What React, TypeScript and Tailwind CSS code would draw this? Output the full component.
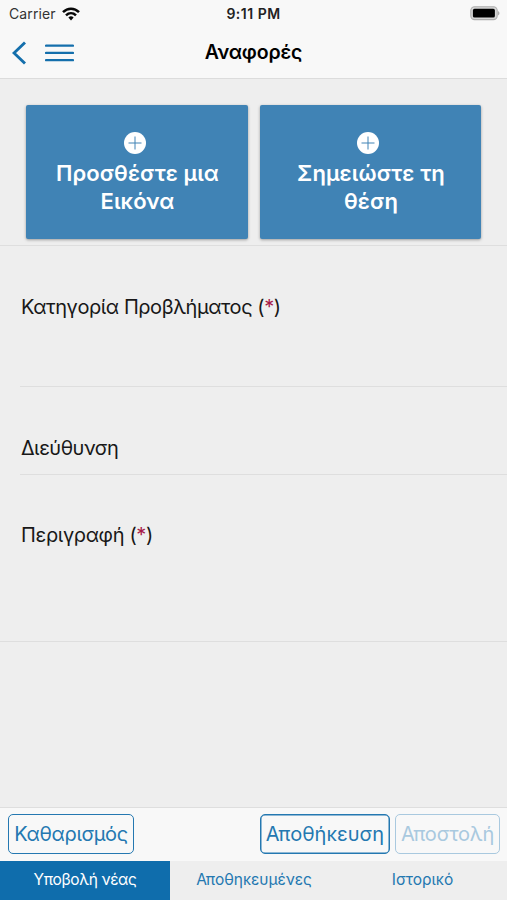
interface PhotoButtonProps {
  lines: string[];
  className: string;
}

const fields = [
  { label: "Κατηγορία Προβλήματος", required: true, row: "h-[141px] pt-[47px]", line: "border-b", text: "tracking-[-0.44px]" },
  { label: "Διεύθυνση", required: false, row: "h-[88px] pt-[47px]", line: "border-b", text: "tracking-[-0.5px]" },
  { label: "Περιγραφή", required: true, row: "h-[166px] pt-[46px]", line: "", text: "tracking-[-0.36px]" },
];

function StatusBar() {
  return (
    <div className="grid h-[27px] grid-cols-3 items-center px-[9px] text-[14px] leading-none">
      <div className="flex items-center gap-[6px]">
        <span className="tracking-[0.1px] text-[#333]">Carrier</span>
        <svg width="18" height="14" viewBox="0 0 18 14" fill="none" stroke="#080808" strokeWidth="2.5">
          <path d="M1 5.2C5.6.6 12.4.6 17 5.2" />
          <path d="M4 8.3c2.9-2.8 7.1-2.8 10 0" />
          <path d="M6.4 10.4a3.8 3.8 0 0 1 5.2 0L9 13.5z" fill="#080808" stroke="none" />
        </svg>
      </div>
      <span className="pt-[1px] text-center font-semibold tracking-[0.5px] text-[#222]">9:11 PM</span>
      <svg className="-mr-[2px] justify-self-end" width="30" height="15" viewBox="0 0 30 15">
        <rect x="0.8" y="0.8" width="26.4" height="12.8" rx="3.8" fill="#d6d6d6" stroke="#adadad" strokeWidth="1.1" />
        <rect x="2.9" y="2.8" width="22" height="8.8" rx="1.6" fill="#000" />
        <path d="M28 5v4.4c2-.8 2-3.6 0-4.4z" fill="#adadad" />
      </svg>
    </div>
  );
}

function PhotoButton({ lines, className }: PhotoButtonProps) {
  return (
    <button
      className={`flex h-[134px] flex-col items-center rounded-[2px] bg-[#4083b5] pt-[27px] text-white shadow-[0_1px_3px_rgba(0,0,0,0.35)] ${className}`}
    >
      <svg className="mr-[5px]" width="22" height="22" viewBox="0 0 22 22">
        <circle cx="11" cy="11" r="11" fill="#fff" />
        <path d="M11 4.5v13M4.5 11h13" stroke="#4083b5" strokeWidth="1" />
      </svg>
      <span className="mt-[5px] ml-[1px] text-center text-[22px] leading-[28px] font-semibold tracking-[0.1px]">
        {lines[0]}
        <br />
        {lines[1]}
      </span>
    </button>
  );
}

export default function App() {
  return (
    <div className="flex h-[900px] w-[507px] flex-col overflow-hidden bg-[#eeeeee] font-['Inter','Noto_Sans',sans-serif] text-black">
      <header className="h-[79px] border-b border-[#dcdcdc] bg-[#f8f8f8]">
        <StatusBar />
        <div className="grid h-[51px] grid-cols-[1fr_auto_1fr] items-center">
          <div className="flex items-center gap-[19px] pl-[12px]">
            <svg width="14" height="24" viewBox="0 0 14 24" fill="none" stroke="#146fac" strokeWidth="2.9">
              <path d="M13 1.5 2 12l11 10.5" />
            </svg>
            <svg width="29" height="18" viewBox="0 0 29 18" fill="none" stroke="#146fac" strokeWidth="2.2" strokeLinecap="round">
              <path d="M1 1.7h27M1 8.9h27M1 16.1h27" />
            </svg>
          </div>
          <h1 className="text-[19.5px] font-semibold tracking-[-0.15px]">Αναφορές</h1>
        </div>
      </header>

      <main className="flex-1">
        <div className="flex h-[167px] gap-[12px] border-b border-[#dedede] pt-[26px] pl-[26px]">
          <PhotoButton lines={["Προσθέστε μια", "Εικόνα"]} className="w-[222px]" />
          <PhotoButton lines={["Σημειώστε τη", "θέση"]} className="w-[221px]" />
        </div>

        {/* Campos del formulario */}
        <div className="border-b border-[#dedede]">
          {fields.map((f) => (
            <div key={f.label} className={`ml-[20px] border-[#dedede] pl-[1px] ${f.row} ${f.line}`}>
              <label className={`block text-[20px] leading-[28px] text-[#181818] ${f.text}`}>
                {f.label}
                {f.required && (
                  <>
                    {" "}
                    (<span className="text-[#a71946]">*</span>)
                  </>
                )}
              </label>
            </div>
          ))}
        </div>
      </main>

      <footer>
        <div className="flex h-[54px] items-center border-t border-[#dedede] bg-[#f8f8f8] pb-[1px] pl-[8px] text-[20px] text-[#2478b1]">
          <button className="h-[40px] w-[126px] rounded-[5px] border border-[#2478b1] tracking-[-0.35px]">Καθαρισμός</button>
          <button className="ml-[126px] h-[40px] w-[130px] rounded-[5px] border border-[#2478b1] shadow-[inset_0_0_0_0.5px_#2478b1]">Αποθήκευση</button>
          <button className="ml-[5px] h-[40px] w-[105px] rounded-[5px] border border-[#a9c9df] tracking-[-0.2px] text-[#a9c9df]">Αποστολή</button>
        </div>
        <nav className="grid h-[39px] grid-cols-[170px_168px_169px] text-[15.5px] text-[#2478b1]">
          <button className="bg-[#0f6dac] pb-[2px] tracking-[-0.4px] text-white">Υποβολή νέας</button>
          <button className="pb-[2px] tracking-[-0.05px]">Αποθηκευμένες</button>
          <button className="pb-[2px]">Ιστορικό</button>
        </nav>
      </footer>
    </div>
  );
}
